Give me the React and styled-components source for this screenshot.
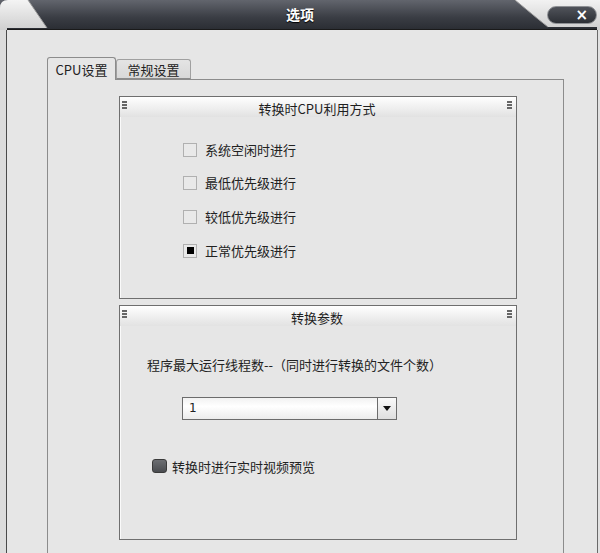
import React from "react";
import styled, { createGlobalStyle } from "styled-components";

const Global = createGlobalStyle`
  html, body { margin: 0; padding: 0; background: #d9d9d9; }
  body { font-family: "Noto Sans CJK SC", "Noto Sans", sans-serif; }
  * { box-sizing: border-box; }
`;

const Window = styled.div`
  width: 600px;
  height: 553px;
  overflow: hidden;
  display: flex;
  flex-direction: column;
  background: #dadada;
  font-size: 13px;
  color: #222;
`;

const TitleBar = styled.div`
  position: relative;
  height: 30px;
  flex: none;
  background: linear-gradient(#62656d, #3a3d44 60%, #2b2e34);
  display: flex;
  align-items: center;
  justify-content: center;
  border-bottom: 1px solid #1a1a1a;
`;

const Title = styled.div`
  color: #fff;
  font-weight: bold;
  font-size: 14px;
  margin-top: -2px;
  text-shadow: 0 1px 1px #000;
`;

const Corner = styled.svg`
  position: absolute;
  top: 0;
  ${(p) => (p.$side === "left" ? "left: 0;" : "right: 0;")}
`;

const CloseButton = styled.button`
  position: absolute;
  top: 6px;
  right: 3px;
  width: 50px;
  height: 18px;
  border-radius: 9px;
  border: 1px solid #8e9094;
  background: linear-gradient(#50535a, #2c2f35);
  color: #fff;
  font: bold 15px "DejaVu Sans", sans-serif;
  line-height: 14px;
  text-align: right;
  padding: 0 8px 0 0;
`;

const Frame = styled.div`
  flex: 1;
  display: flex;
  padding: 0 2px 0 6px;
  background: linear-gradient(90deg, #dcdcdc, #e2e2e2);
`;

const Body = styled.div`
  flex: 1;
  background: #e6e6e6;
  border-left: 1px solid #4a4a4a;
  border-right: 1px solid #6a6a6a;
  padding: 26px 0 0 40px;
`;

const TabStrip = styled.div`
  display: flex;
  align-items: flex-end;
  height: 23px;
  position: relative;
  z-index: 1;
`;

const Tab = styled.div`
  height: ${(p) => (p.$active ? "23px" : "20px")};
  width: ${(p) => (p.$active ? "69px" : "75px")};
  border: 1px solid ${(p) => (p.$active ? "#8c8c8c" : "#a0a0a0")};
  border-bottom: ${(p) => (p.$active ? "none" : "1px solid #8c8c8c")};
  border-radius: 3px 3px 0 0;
  background: ${(p) => (p.$active ? "#e6e6e6" : "linear-gradient(#e4e4e4, #d8d8d8)")};
  display: flex;
  align-items: center;
  justify-content: center;
  font-size: 13px;
  color: #222;
  padding-top: ${(p) => (p.$active ? "1px" : "0")};
  margin-bottom: ${(p) => (p.$active ? "-1px" : "0")};
`;

const Panel = styled.div`
  width: 517px;
  height: 480px;
  border: 1px solid #8c8c8c;
  border-bottom: none;
  padding: 16px 0 0 71px;
  display: flex;
  flex-direction: column;
  gap: 6px;
`;

const Group = styled.div`
  width: 398px;
  height: ${(p) => p.$h}px;
  border: 1px solid #6f6f6f;
  box-shadow: inset 1px 1px 0 #fafafa;
  display: flex;
  flex-direction: column;
`;

const GroupHeader = styled.div`
  height: 20px;
  flex: none;
  display: flex;
  align-items: flex-start;
  padding: 4px 4px 0 2px;
  background: linear-gradient(#ffffff, #f3f3f3 40%, #e2e2e2);
`;

const Grip = styled.div`
  width: 5px;
  height: 8px;
  flex: none;
  background: repeating-linear-gradient(#666 0 2px, transparent 2px 3px);
`;

const GroupTitle = styled.div`
  flex: 1;
  text-align: center;
  font-size: 13px;
  line-height: 15px;
  color: #1e1e1e;
`;

const OptionList = styled.div`
  padding: 16px 0 0 63px;
  display: flex;
  flex-direction: column;
`;

const OptionRow = styled.div`
  height: ${(p) => p.$h}px;
  display: flex;
  align-items: center;
  gap: 8px;
`;

const Check = styled.span`
  width: 14px;
  height: 14px;
  flex: none;
  border: 1px solid #b0b0b0;
  background: #e9e9e9;
  display: flex;
  align-items: center;
  justify-content: center;
  &::after {
    content: "";
    width: 7px;
    height: 7px;
    background: ${(p) => (p.$checked ? "#000" : "transparent")};
  }
`;

const Params = styled.div`
  padding: 29px 0 0 27px;
  display: flex;
  flex-direction: column;
`;

const Label = styled.div`
  height: 20px;
  line-height: 20px;
  font-size: 13px;
`;

const Combo = styled.div`
  margin: 22px 0 0 35px;
  width: 215px;
  height: 23px;
  border: 1px solid #6c6c6c;
  display: flex;
  background: linear-gradient(#f2f2f2, #ffffff 40%, #ececec);
`;

const ComboValue = styled.div`
  flex: 1;
  padding-left: 6px;
  font-size: 12px;
  line-height: 21px;
  font-family: "DejaVu Sans", sans-serif;
`;

const ComboButton = styled.div`
  width: 19px;
  border-left: 1px solid #6c6c6c;
  background: linear-gradient(#fafafa, #dedede);
  display: flex;
  align-items: center;
  justify-content: center;
  &::after {
    content: "";
    border-left: 4px solid transparent;
    border-right: 4px solid transparent;
    border-top: 5px solid #111;
  }
`;

const PreviewRow = styled.div`
  margin: 36px 0 0 5px;
  height: 20px;
  display: flex;
  align-items: center;
  gap: 5px;
`;

const DarkCheck = styled.span`
  width: 15px;
  height: 14px;
  border-radius: 3px;
  border: 1px solid #3a3a3a;
  background: linear-gradient(#6c6e72, #4a4c50);
`;

export default function App() {
  const options = ["系统空闲时进行", "最低优先级进行", "较低优先级进行", "正常优先级进行"];
  const heights = [33, 33, 35, 33];
  return (
    <>
      <Global />
      <Window>
        <TitleBar>
          <Corner $side="left" width="50" height="30" viewBox="0 0 50 30">
            <defs>
              <linearGradient id="lg" x1="0" y1="0" x2="0" y2="1">
                <stop offset="0" stopColor="#f4f4f4" />
                <stop offset="1" stopColor="#cfcfcf" />
              </linearGradient>
            </defs>
            <path d="M0 30 L0 8 Q0 0 8 0 L28 0 L47 28 L7 28 L7 30 Z" fill="url(#lg)" />
            <path d="M28 0 L47 28" stroke="#9a9a9a" strokeWidth="1" />
          </Corner>
          <Title>选项</Title>
          <Corner $side="right" width="90" height="30" viewBox="0 0 90 30">
            <defs>
              <linearGradient id="rg" x1="0" y1="0" x2="0" y2="1">
                <stop offset="0" stopColor="#f2f2f2" />
                <stop offset="1" stopColor="#cdcdcd" />
              </linearGradient>
            </defs>
            <path d="M5 0 L90 0 L90 30 L87 30 L87 27 L38 27 L28 19 Z" fill="url(#rg)" />
            <path d="M5 0 L28 19 L38 27" stroke="#9a9a9a" strokeWidth="1" fill="none" />
          </Corner>
          <CloseButton>×</CloseButton>
        </TitleBar>
        <Frame>
          <Body>
            <TabStrip>
              <Tab $active>CPU设置</Tab>
              <Tab>常规设置</Tab>
            </TabStrip>
            <Panel>
              <Group $h={203}>
                <GroupHeader>
                  <Grip />
                  <GroupTitle>转换时CPU利用方式</GroupTitle>
                  <Grip />
                </GroupHeader>
                <OptionList>
                  {options.map((o, i) => (
                    <OptionRow key={o} $h={heights[i]}>
                      <Check $checked={i === 3} />
                      {o}
                    </OptionRow>
                  ))}
                </OptionList>
              </Group>
              <Group $h={235}>
                <GroupHeader>
                  <Grip />
                  <GroupTitle>转换参数</GroupTitle>
                  <Grip />
                </GroupHeader>
                <Params>
                  <Label>程序最大运行线程数--（同时进行转换的文件个数）</Label>
                  <Combo>
                    <ComboValue>1</ComboValue>
                    <ComboButton />
                  </Combo>
                  <PreviewRow>
                    <DarkCheck />
                    转换时进行实时视频预览
                  </PreviewRow>
                </Params>
              </Group>
            </Panel>
          </Body>
        </Frame>
      </Window>
    </>
  );
}
